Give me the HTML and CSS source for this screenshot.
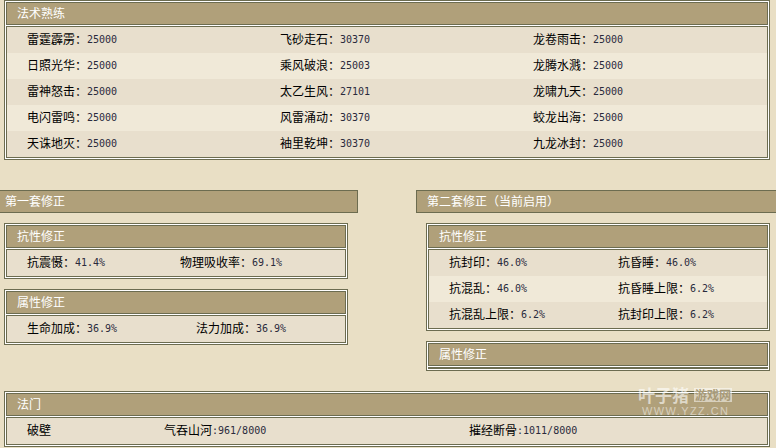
FILE: index.html
```html
<!DOCTYPE html>
<html lang="zh">
<head>
<meta charset="utf-8">
<title>法术熟练</title>
<link rel="stylesheet" href="styles.css">
</head>
<body>
<div class="page">
  <section class="panel">
    <h3 class="panel-head">法术熟练</h3>
    <div class="panel-body spells">
      <div class="row"><span>雷霆霹雳：<b>25000</b></span><span>飞砂走石：<b>30370</b></span><span>龙卷雨击：<b>25000</b></span></div>
      <div class="row"><span>日照光华：<b>25000</b></span><span>乘风破浪：<b>25003</b></span><span>龙腾水溅：<b>25000</b></span></div>
      <div class="row"><span>雷神怒击：<b>25000</b></span><span>太乙生风：<b>27101</b></span><span>龙啸九天：<b>25000</b></span></div>
      <div class="row"><span>电闪雷鸣：<b>25000</b></span><span>风雷涌动：<b>30370</b></span><span>蛟龙出海：<b>25000</b></span></div>
      <div class="row"><span>天诛地灭：<b>25000</b></span><span>袖里乾坤：<b>30370</b></span><span>九龙冰封：<b>25000</b></span></div>
    </div>
  </section>

  <div class="sets">
    <div class="set set-left">
      <h2 class="set-title">第一套修正</h2>
      <section class="panel">
        <h3 class="panel-head">抗性修正</h3>
        <div class="panel-body res-left">
          <div class="row"><span>抗震慑：<b>41.4%</b></span><span>物理吸收率：<b>69.1%</b></span></div>
        </div>
      </section>
      <section class="panel">
        <h3 class="panel-head">属性修正</h3>
        <div class="panel-body attr-left">
          <div class="row"><span>生命加成：<b>36.9%</b></span><span>法力加成：<b>36.9%</b></span></div>
        </div>
      </section>
    </div>
    <div class="set set-right">
      <h2 class="set-title">第二套修正（当前启用）</h2>
      <section class="panel">
        <h3 class="panel-head">抗性修正</h3>
        <div class="panel-body res-right">
          <div class="row"><span>抗封印：<b>46.0%</b></span><span>抗昏睡：<b>46.0%</b></span></div>
          <div class="row"><span>抗混乱：<b>46.0%</b></span><span>抗昏睡上限：<b>6.2%</b></span></div>
          <div class="row"><span>抗混乱上限：<b>6.2%</b></span><span>抗封印上限：<b>6.2%</b></span></div>
        </div>
      </section>
      <section class="panel">
        <h3 class="panel-head">属性修正</h3>
        <div class="panel-body empty"></div>
      </section>
    </div>
  </div>

  <section class="panel panel-last">
    <h3 class="panel-head">法门</h3>
    <div class="panel-body doors">
      <div class="row"><span>破壁</span><span>气吞山河<b>:961/8000</b></span><span>摧经断骨<b>:1011/8000</b></span></div>
    </div>
  </section>
</div>
<div class="watermark" aria-hidden="true">
  <div class="wm-top"><span class="wm-name">叶子猪</span><span class="wm-tag">游戏网</span></div>
  <div class="wm-url">WWW.YZZ.CN</div>
</div>
</body>
</html>
```
FILE: styles.css
```css
* { box-sizing: border-box; }
html, body { margin: 0; height: 100%; }
body {
  position: relative;
  width: 776px;
  height: 448px;
  overflow: hidden;
  background: #e9dfc5;
  color: #000;
  font: 12px/16px "Noto Sans CJK SC", sans-serif;
}
.page { padding: 0 6px 0 4px; }
.panel {
  border: 1px solid #6c6c50;
  background: #fff;
  padding: 1px;
  margin: 0;
}
.panel-head {
  margin: 0;
  height: 23px;
  padding-left: 10px;
  border: 1px solid #6c6c50;
  background: #b0a07a;
  color: #fff;
  font: inherit;
  line-height: 20px;
}
.panel-body {
  margin-top: 1px;
  border: 1px solid #6c6c50;
  background: #e8dfcd;
}
.row {
  display: grid;
  height: 26px;
  padding: 0 0 2px 20px;
  align-items: center;
  white-space: nowrap;
}
.row b {
  font: 400 10px/14px "DejaVu Sans Mono", monospace;
  color: #2a2a3c;
  vertical-align: 1px;
}
.spells .row { grid-template-columns: 253px 253px 1fr; }
.spells .row:nth-child(even), .res-right .row:nth-child(even) { background: #f0e9d8; }
.res-left .row { grid-template-columns: 153px 1fr; }
.attr-left .row { grid-template-columns: 169px 1fr; }
.res-right .row { grid-template-columns: 169px 1fr; }
.doors .row { grid-template-columns: 137px 305px 1fr; }
.empty { height: 2px; background: #6c6c50; }
.sets { display: flex; margin-top: 30px; margin-left: -5px; }
.set { display: flex; flex-direction: column; }
.set-left { width: 359px; }
.set-right { width: 360px; margin-left: 58px; margin-right: -6px; }
.set-title {
  margin: 0 0 10px;
  height: 23px;
  border: 1px solid #6c6c50;
  background: #b0a07a;
  color: #fff;
  font: inherit;
  line-height: 20px;
}
.set-left .set-title { padding-left: 5px; }
.set-right .set-title { padding-left: 10px; border-right: 0; }
.set-left .panel { width: 344px; margin-left: 5px; }
.set-right .panel { width: 344px; margin-left: 10px; }
.set .panel + .panel { margin-top: 10px; }
.panel-last { margin-top: 20px; }
.watermark {
  position: absolute;
  left: 638px;
  top: 386px;
  width: 96px;
}
.wm-top { display: flex; align-items: center; gap: 5px; height: 18px; }
.wm-name {
  color: rgba(255,255,255,.6);
  font-size: 17px;
  font-weight: 700;
  line-height: 18px;
}
.wm-tag {
  height: 14px;
  padding: 0 1px;
  background: rgba(255,255,255,.5);
  color: #a89a78;
  font-size: 12px;
  line-height: 14px;
  font-weight: 700;
}
.wm-url {
  margin: 3px 0 0 4px;
  font: 400 11px/9px "Liberation Sans", sans-serif;
  letter-spacing: 1.4px;
  white-space: nowrap;
  color: rgba(255,255,255,.5);
}
```
